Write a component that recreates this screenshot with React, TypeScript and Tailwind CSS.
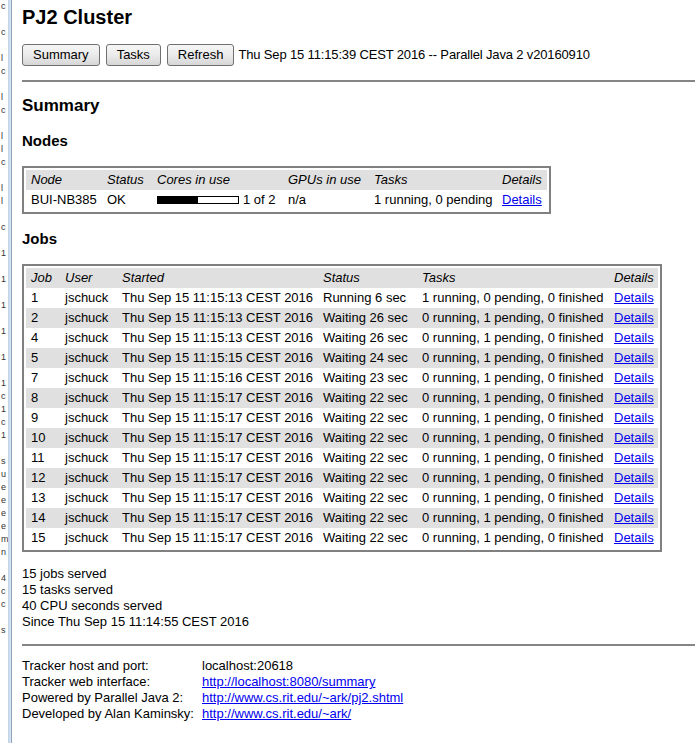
import React from "react";

const jobs: [string, string, string, string][] = [
  ["1", "Thu Sep 15 11:15:13 CEST 2016", "Running 6 sec", "1 running, 0 pending, 0 finished"],
  ["2", "Thu Sep 15 11:15:13 CEST 2016", "Waiting 26 sec", "0 running, 1 pending, 0 finished"],
  ["4", "Thu Sep 15 11:15:13 CEST 2016", "Waiting 26 sec", "0 running, 1 pending, 0 finished"],
  ["5", "Thu Sep 15 11:15:15 CEST 2016", "Waiting 24 sec", "0 running, 1 pending, 0 finished"],
  ["7", "Thu Sep 15 11:15:16 CEST 2016", "Waiting 23 sec", "0 running, 1 pending, 0 finished"],
  ["8", "Thu Sep 15 11:15:17 CEST 2016", "Waiting 22 sec", "0 running, 1 pending, 0 finished"],
  ["9", "Thu Sep 15 11:15:17 CEST 2016", "Waiting 22 sec", "0 running, 1 pending, 0 finished"],
  ["10", "Thu Sep 15 11:15:17 CEST 2016", "Waiting 22 sec", "0 running, 1 pending, 0 finished"],
  ["11", "Thu Sep 15 11:15:17 CEST 2016", "Waiting 22 sec", "0 running, 1 pending, 0 finished"],
  ["12", "Thu Sep 15 11:15:17 CEST 2016", "Waiting 22 sec", "0 running, 1 pending, 0 finished"],
  ["13", "Thu Sep 15 11:15:17 CEST 2016", "Waiting 22 sec", "0 running, 1 pending, 0 finished"],
  ["14", "Thu Sep 15 11:15:17 CEST 2016", "Waiting 22 sec", "0 running, 1 pending, 0 finished"],
  ["15", "Thu Sep 15 11:15:17 CEST 2016", "Waiting 22 sec", "0 running, 1 pending, 0 finished"],
];

const fragments = [
  "c", "", "c", "", "l", "c", "", "l", "c", "", "l", "l", "c", "", "l", "l", "", "c", "", "1",
  "", "1", "", "1", "", "1", "", "1", "", "1", "c", "1", "c", "1", "", "s", "u", "e", "e", "e",
  "e", "m", "n", "", "4", "c", "c", "", "s",
];

function Btn({ children }: { children: React.ReactNode }) {
  return (
    <div className="h-[22px] px-[10px] flex items-center border border-[#707070] rounded-[3px] bg-gradient-to-b from-[#f6f6f6] via-[#ebebeb] to-[#d6d6d6] text-[13px] leading-[16px]">
      {children}
    </div>
  );
}

function Link({ children }: { children: React.ReactNode }) {
  return <span className="text-[#0000ee] underline">{children}</span>;
}

export default function App() {
  return (
    <div
      className="flex w-[695px] h-[743px] overflow-hidden bg-white text-black"
      style={{ fontFamily: '"Liberation Sans", Arial, sans-serif' }}
    >
      <div className="w-[8px] shrink-0 flex flex-col overflow-hidden bg-white text-[9px] leading-[13px] text-[#333] pl-[1px]">
        {fragments.map((f, i) => (
          <div key={i} className="h-[13px] whitespace-nowrap">
            {f}
          </div>
        ))}
      </div>
      <div className="w-[3px] shrink-0 bg-gradient-to-r from-[#bcd0e8] to-[#dfe8f3]" />
      <div className="w-[1px] shrink-0 bg-[#8ea3bd]" />
      <div className="flex-1 min-w-0 pl-[10px] text-[13px] leading-[16px]">
        <div className="pt-[5px] text-[20px] leading-[24px] font-bold">PJ2 Cluster</div>

        <div className="mt-[15px] flex items-center whitespace-nowrap">
          <Btn>Summary</Btn>
          <div className="w-[6px]" />
          <Btn>Tasks</Btn>
          <div className="w-[6px]" />
          <Btn>Refresh</Btn>
          <div className="ml-[4px] tracking-[-0.15px]">Thu Sep 15 11:15:39 CEST 2016 -- Parallel Java 2 v20160910</div>
        </div>

        <div className="mt-[14px] h-[2px] bg-[#858585]" />

        <div className="mt-[14px] text-[17px] leading-[20px] font-bold">Summary</div>

        <div className="mt-[16px] text-[15px] leading-[18px] font-bold">Nodes</div>

        <div className="mt-[16px] inline-block border-2 border-[#808080] p-[2px]">
          <table className="table-fixed border-collapse w-[521px]">
            <colgroup>
              <col className="w-[76px]" />
              <col className="w-[50px]" />
              <col className="w-[131px]" />
              <col className="w-[86px]" />
              <col className="w-[128px]" />
              <col className="w-[50px]" />
            </colgroup>
            <tbody>
              <tr className="bg-[#e0e0e0] italic h-[20px]">
                {["Node", "Status", "Cores in use", "GPUs in use", "Tasks", "Details"].map((h) => (
                  <td key={h} className="pl-[5px] py-[2px] whitespace-nowrap text-left">
                    {h}
                  </td>
                ))}
              </tr>
              <tr className="h-[20px]">
                <td className="pl-[5px] py-[2px] whitespace-nowrap">BUI-NB385</td>
                <td className="pl-[5px] py-[2px] whitespace-nowrap">OK</td>
                <td className="pl-[5px] py-[2px] whitespace-nowrap">
                  <div className="flex items-center">
                    <div className="w-[82px] h-[8px] border border-black flex">
                      <div className="w-1/2 h-full bg-black" />
                    </div>
                    <span className="ml-[4px]">1 of 2</span>
                  </div>
                </td>
                <td className="pl-[5px] py-[2px] whitespace-nowrap">n/a</td>
                <td className="pl-[5px] py-[2px] whitespace-nowrap">1 running, 0 pending</td>
                <td className="pl-[5px] py-[2px] whitespace-nowrap">
                  <Link>Details</Link>
                </td>
              </tr>
            </tbody>
          </table>
        </div>

        <div className="mt-[12px] text-[15px] leading-[18px] font-bold">Jobs</div>

        <div className="mt-[16px] inline-block border-2 border-[#808080] p-[2px]">
          <table className="table-fixed border-collapse w-[632px]">
            <colgroup>
              <col className="w-[34px]" />
              <col className="w-[57px]" />
              <col className="w-[201px]" />
              <col className="w-[99px]" />
              <col className="w-[192px]" />
              <col className="w-[49px]" />
            </colgroup>
            <tbody>
              <tr className="bg-[#e0e0e0] italic h-[20px]">
                {["Job", "User", "Started", "Status", "Tasks", "Details"].map((h) => (
                  <td key={h} className="pl-[5px] py-[2px] whitespace-nowrap text-left">
                    {h}
                  </td>
                ))}
              </tr>
              {jobs.map((j, i) => (
                <tr key={j[0]} className={i % 2 === 1 ? "bg-[#e0e0e0] h-[20px]" : "h-[20px]"}>
                  <td className="pl-[5px] py-[2px] whitespace-nowrap">{j[0]}</td>
                  <td className="pl-[5px] py-[2px] whitespace-nowrap">jschuck</td>
                  <td className="pl-[5px] py-[2px] whitespace-nowrap">{j[1]}</td>
                  <td className="pl-[5px] py-[2px] whitespace-nowrap">{j[2]}</td>
                  <td className="pl-[5px] py-[2px] whitespace-nowrap">{j[3]}</td>
                  <td className="pl-[5px] py-[2px] whitespace-nowrap">
                    <Link>Details</Link>
                  </td>
                </tr>
              ))}
            </tbody>
          </table>
        </div>

        <div className="mt-[10px]">
          <div>15 jobs served</div>
          <div>15 tasks served</div>
          <div>40 CPU seconds served</div>
          <div>Since Thu Sep 15 11:14:55 CEST 2016</div>
        </div>

        <div className="mt-[14px] h-[2px] bg-[#858585]" />

        <div className="mt-[12px] grid grid-cols-[180px_auto] whitespace-nowrap">
          <div>Tracker host and port:</div>
          <div>localhost:20618</div>
          <div>Tracker web interface:</div>
          <div>
            <Link>http://localhost:8080/summary</Link>
          </div>
          <div>Powered by Parallel Java 2:</div>
          <div>
            <Link>http://www.cs.rit.edu/~ark/pj2.shtml</Link>
          </div>
          <div>Developed by Alan Kaminsky:</div>
          <div>
            <Link>http://www.cs.rit.edu/~ark/</Link>
          </div>
        </div>
      </div>
    </div>
  );
}
